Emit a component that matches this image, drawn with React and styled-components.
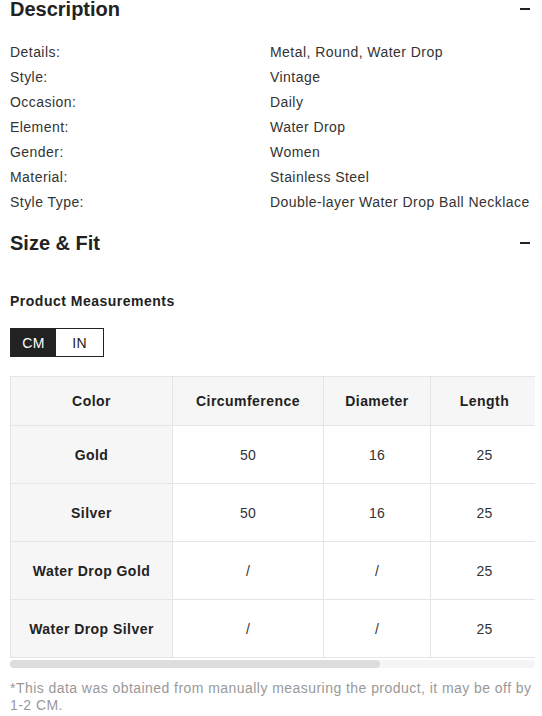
import React, { useState } from "react";
import styled, { createGlobalStyle } from "styled-components";

const GlobalStyle = createGlobalStyle`
  body {
    margin: 0;
    background: #fff;
    font-family: "Liberation Sans", Arial, sans-serif;
    color: #333;
  }
`;

const Page = styled.div`
  width: 525px;
  padding-left: 10px;
  margin-top: -15px;
`;

const SectionHeader = styled.div`
  height: 48px;
  display: flex;
  align-items: center;
  justify-content: space-between;
  padding-right: 5px;
`;

const SectionTitle = styled.h2`
  margin: 0;
  font-size: 20px;
  font-weight: 700;
  color: #222;
  line-height: 24px;
`;

const Minus = styled.span`
  display: block;
  width: 10px;
  height: 2px;
  background: #222;
`;

const AttrList = styled.div`
  padding: 7px 0 4px;
`;

const AttrRow = styled.div`
  display: flex;
  font-size: 14px;
  line-height: 25px;
  letter-spacing: 0.45px;
  color: #333;
`;

const AttrLabel = styled.div`
  width: 260px;
  flex-shrink: 0;
`;

const AttrValue = styled.div`
  white-space: nowrap;
`;

const SubTitle = styled.div`
  margin-top: 24px;
  font-size: 14px;
  font-weight: 700;
  line-height: 20px;
  letter-spacing: 0.5px;
  color: #222;
`;

const UnitToggle = styled.div`
  display: inline-flex;
  margin-top: 17px;
  border: 1px solid #222;
  height: 27px;
`;

const UnitButton = styled.button`
  width: ${(p) => p.$w}px;
  border: none;
  padding: 0;
  margin: 0;
  font-family: inherit;
  font-size: 14px;
  letter-spacing: 0.3px;
  background: ${(p) => (p.$active ? "#222" : "#fff")};
  color: ${(p) => (p.$active ? "#fff" : "#222")};
  cursor: pointer;
`;

const TableWrap = styled.div`
  margin-top: 19px;
  width: 525px;
  overflow: hidden;
`;

const Table = styled.table`
  border-collapse: collapse;
  width: 745px;
  table-layout: fixed;
  font-size: 14px;
`;

const Cell = styled.td`
  border: 1px solid #e5e5e5;
  text-align: center;
  padding: 0 8px;
  height: ${(p) => (p.$head ? 48 : 57)}px;
  background: ${(p) => (p.$shade ? "#f6f6f6" : "#fff")};
  color: ${(p) => (p.$bold ? "#222" : "#333")};
  font-weight: ${(p) => (p.$bold ? 700 : 400)};
  letter-spacing: ${(p) => (p.$bold ? 0.45 : 0.3)}px;
  white-space: nowrap;
`;

const ScrollTrack = styled.div`
  margin-top: 2px;
  width: 525px;
  height: 8px;
  border-radius: 4px;
  background: #f5f5f5;
`;

const ScrollThumb = styled.div`
  height: 100%;
  border-radius: 4px;
  background: #ddd;
`;

const Note = styled.p`
  margin: 12px 0 0;
  font-size: 14px;
  line-height: 17px;
  letter-spacing: 0.45px;
  color: #999;
`;

const attrs = [
  ["Details:", "Metal, Round, Water Drop"],
  ["Style:", "Vintage"],
  ["Occasion:", "Daily"],
  ["Element:", "Water Drop"],
  ["Gender:", "Women"],
  ["Material:", "Stainless Steel"],
  ["Style Type:", "Double-layer Water Drop Ball Necklace"],
];

const rows = [
  ["Gold", "50", "16", "25"],
  ["Silver", "50", "16", "25"],
  ["Water Drop Gold", "/", "/", "25"],
  ["Water Drop Silver", "/", "/", "25"],
];

const tableWidth = 745;
const viewWidth = 525;

const App = () => {
  const [unit, setUnit] = useState("CM");

  return (
    <Page>
      <GlobalStyle />
      <SectionHeader>
        <SectionTitle>Description</SectionTitle>
        <Minus />
      </SectionHeader>
      <AttrList>
        {attrs.map(([label, value]) => (
          <AttrRow key={label}>
            <AttrLabel>{label}</AttrLabel>
            <AttrValue>{value}</AttrValue>
          </AttrRow>
        ))}
      </AttrList>

      <SectionHeader>
        <SectionTitle>Size &amp; Fit</SectionTitle>
        <Minus />
      </SectionHeader>
      <SubTitle>Product Measurements</SubTitle>
      <UnitToggle>
        <UnitButton $w={45} $active={unit === "CM"} onClick={() => setUnit("CM")}>
          CM
        </UnitButton>
        <UnitButton $w={47} $active={unit === "IN"} onClick={() => setUnit("IN")}>
          IN
        </UnitButton>
      </UnitToggle>

      <TableWrap>
        <Table>
          <colgroup>
            <col style={{ width: 162 }} />
            <col style={{ width: 151 }} />
            <col style={{ width: 107 }} />
            <col style={{ width: 108 }} />
            <col />
          </colgroup>
          <thead>
            <tr>
              <Cell as="th" $head $shade $bold>Color</Cell>
              <Cell as="th" $head $shade $bold>Circumference</Cell>
              <Cell as="th" $head $shade $bold>Diameter</Cell>
              <Cell as="th" $head $shade $bold>Length</Cell>
              <Cell as="th" $head $shade $bold></Cell>
            </tr>
          </thead>
          <tbody>
            {rows.map((r) => (
              <tr key={r[0]}>
                <Cell $shade $bold>{r[0]}</Cell>
                <Cell>{r[1]}</Cell>
                <Cell>{r[2]}</Cell>
                <Cell>{r[3]}</Cell>
                <Cell></Cell>
              </tr>
            ))}
          </tbody>
        </Table>
      </TableWrap>
      <ScrollTrack>
        <ScrollThumb style={{ width: (viewWidth / tableWidth) * viewWidth }} />
      </ScrollTrack>

      <Note>
        *This data was obtained from manually measuring the product, it may be off by
        1-2 CM.
      </Note>
    </Page>
  );
};

export default App;
